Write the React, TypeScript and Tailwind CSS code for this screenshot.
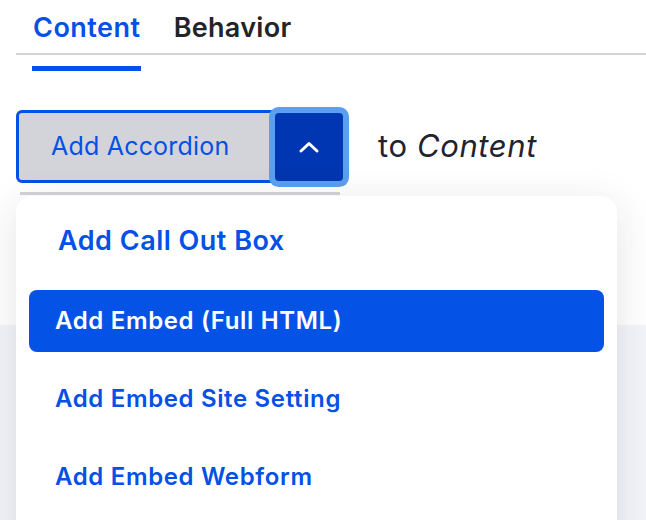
import React from 'react';

const items = [
  { label: 'Add Embed (Full HTML)', active: true },
  { label: 'Add Embed Site Setting', active: false },
  { label: 'Add Embed Webform', active: false },
];

export default function App() {
  return (
    <div className="relative h-[520px] w-[646px] overflow-hidden bg-[#f3f4f9] font-['Inter',sans-serif]">
      {/* Top white area */}
      <div className="flex h-[325px] flex-col bg-white">
        {/* Tabs */}
        <div className="ml-4 flex h-[55px] items-center gap-[33px] border-b-2 border-[#d3d4d9] pl-[17px] pt-[3px]">
          <span className="text-[27px] font-semibold tracking-[0.5px] text-[#0550e6]">Content</span>
          <span className="text-[27px] font-semibold tracking-[0.3px] text-[#232429]">Behavior</span>
        </div>
        <div className="ml-[32px] mt-[11px] h-[5px] w-[109px] bg-[#0550e6]" />

        {/* Split button */}
        <div className="ml-4 mt-[39px] flex items-center">
          <button className="flex h-[73px] w-[257px] items-center rounded-l-[6px] border-[3px] border-[#0550e6] bg-[#d3d4d9] pl-[32px] text-[25px] tracking-[0.2px] text-[#0550e6]">
            Add Accordion
          </button>
          <button className="ml-[2px] flex h-[68px] w-[68px] items-center justify-center rounded-[4px] bg-[#0036b1] ring-[6px] ring-[#5b9ff0]">
            <svg width="22" height="14" viewBox="0 0 22 14" fill="none">
              <path d="M3 11 L11 3.5 L19 11" stroke="white" strokeWidth="3" strokeLinecap="round" strokeLinejoin="round" />
            </svg>
          </button>
          <span className="ml-[35px] text-[31px] tracking-[0.6px] text-[#222330]">
            to <em>Content</em>
          </span>
        </div>
        <div className="ml-[20px] mt-[9px] h-[3px] w-[320px] bg-[#d3d4d9]" />
      </div>

      {/* Dropdown menu */}
      <div className="absolute left-4 top-[196px] h-[360px] w-[601px] rounded-[16px] bg-white px-[13px] pt-[14px] shadow-[0_8px_40px_rgba(34,35,48,0.12)]">
        <div className="flex h-[62px] items-center pl-[29px] text-[27px] font-semibold tracking-[0.5px] text-[#0550e6]">
          Add Call Out Box
        </div>
        <div className="mt-[18px] flex flex-col gap-[16px]">
          {items.map((item) => (
            <div
              key={item.label}
              className={`flex h-[62px] items-center rounded-[8px] pl-[26px] text-[24px] font-semibold tracking-[0.65px] ${
                item.active ? 'bg-[#0553e6] text-white' : 'text-[#0550e6]'
              }`}
            >
              {item.label}
            </div>
          ))}
        </div>
      </div>
    </div>
  );
}
